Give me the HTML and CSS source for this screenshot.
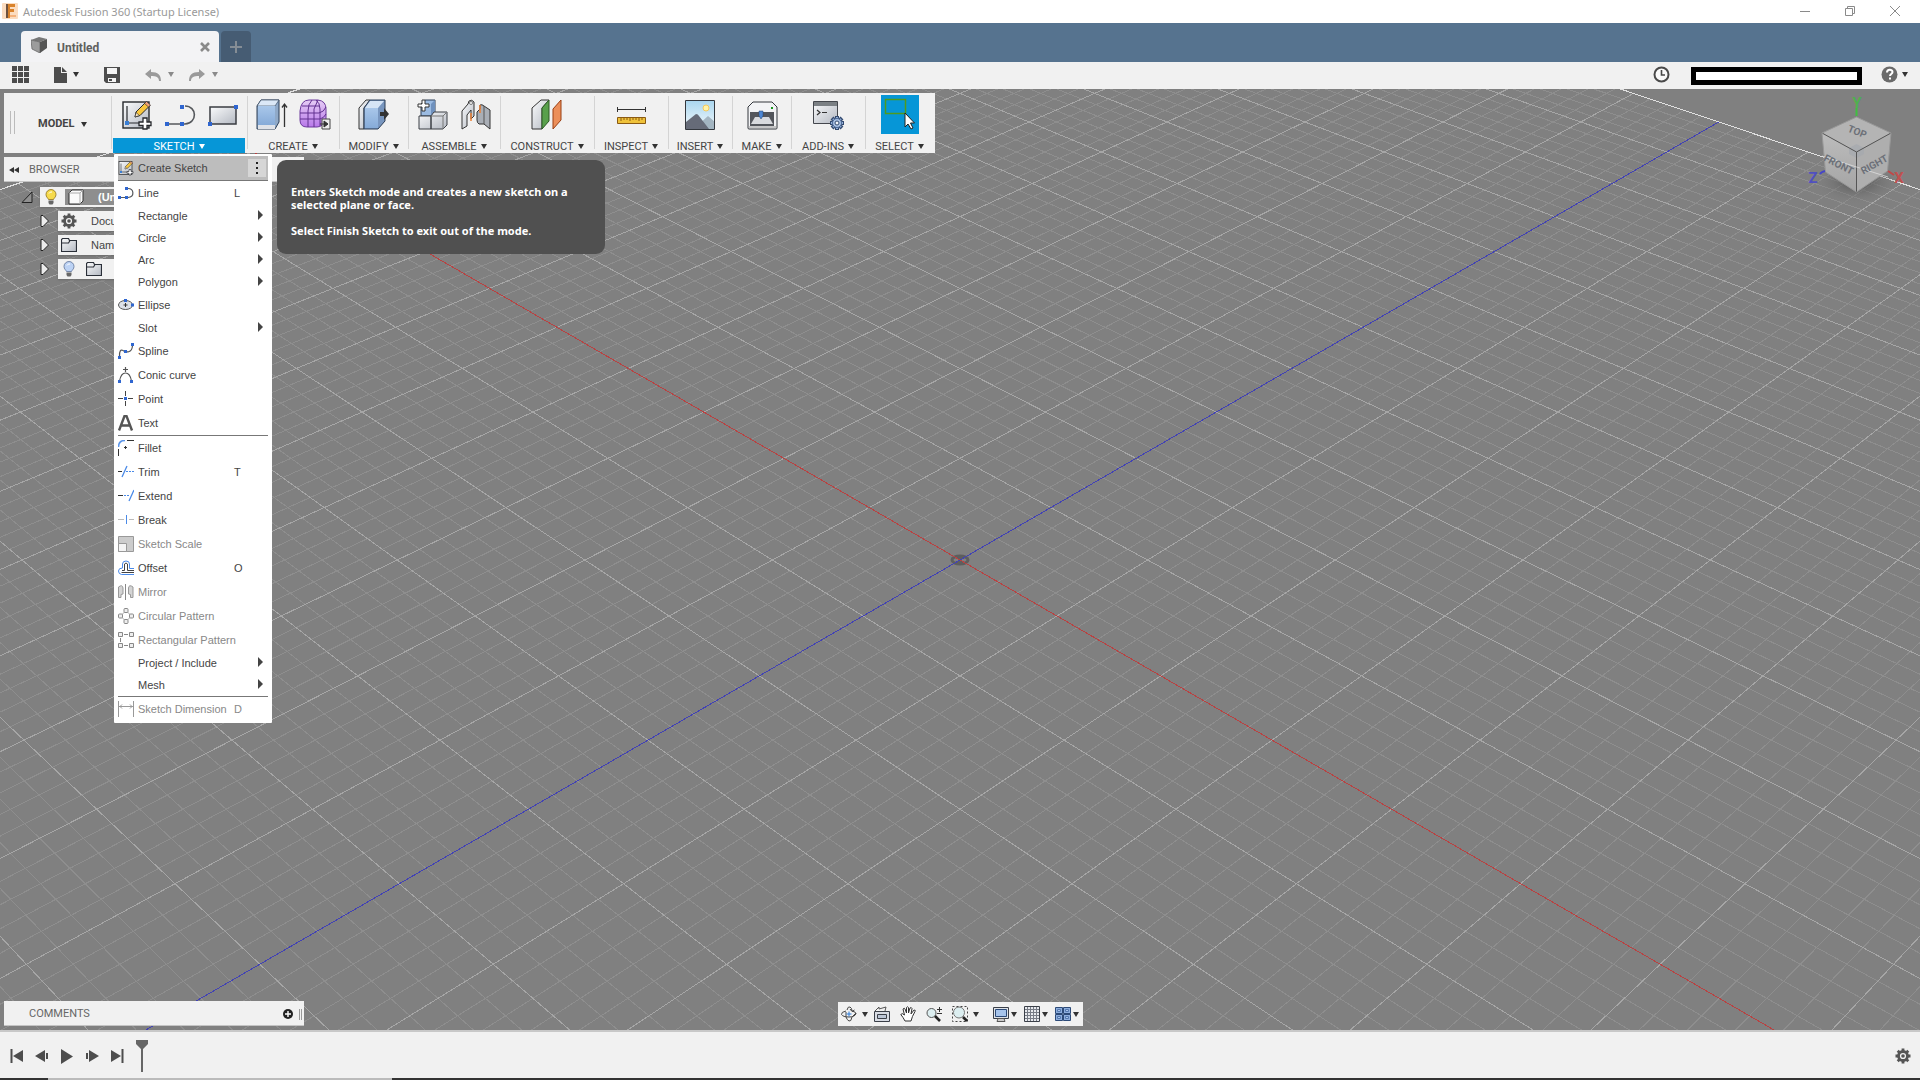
FILE: index.html
```html
<!DOCTYPE html>
<html lang="en">
<head>
<meta charset="utf-8">
<title>Autodesk Fusion 360 (Startup License)</title>
<link rel="stylesheet" href="styles.css">
</head>
<body>
<svg class="defs" aria-hidden="true">
  <defs>
    <linearGradient id="g-silver" x1="0" y1="0" x2="1" y2="1"><stop offset="0" stop-color="#fafbfc"/><stop offset="1" stop-color="#b4b9c2"/></linearGradient>
    <linearGradient id="g-blue" x1="0" y1="0" x2="0" y2="1"><stop offset="0" stop-color="#a9c7ea"/><stop offset="1" stop-color="#86abd8"/></linearGradient>
    <linearGradient id="g-sky" x1="0" y1="0" x2="0" y2="1"><stop offset="0" stop-color="#a9d6ef"/><stop offset="1" stop-color="#f4fafc"/></linearGradient>
    <linearGradient id="g-purple" x1="0" y1="0" x2="0" y2="1"><stop offset="0" stop-color="#e6cdf5"/><stop offset="1" stop-color="#b878ea"/></linearGradient>
    <linearGradient id="g-front" x1="0" y1="0" x2="0" y2="1"><stop offset="0" stop-color="#bcbcbc"/><stop offset="1" stop-color="#a4a4a4"/></linearGradient>
    <radialGradient id="g-shadow"><stop offset="0" stop-color="#444" stop-opacity=".8"/><stop offset="1" stop-color="#808080" stop-opacity="0"/></radialGradient>
    <symbol id="i-sketch" viewBox="0 0 32 32">
      <rect x="2" y="3" width="26" height="26" fill="url(#g-silver)" stroke="#26282c" stroke-width="1.4"/>
      <path d="M6 7v17h13" fill="none" stroke="#26282c" stroke-width="1.2"/>
      <rect x="4" y="22" width="4" height="4" fill="#3a7fd5"/>
      <path d="M14 18l1-5L25 3l4 3.500L19 16.500z" fill="#f8c63d" stroke="#26282c"/>
      <path d="M23.500 4.500L25.500 2.500l4 3.500-2 2z" fill="#f2a27a" stroke="#26282c" stroke-width=".6"/>
      <path d="M14 18l1-4.500 3.500 3z" fill="#fbe6c0" stroke="#26282c" stroke-width=".6"/>
      <path d="M22 19h4v4h4v3.500h-4V30h-4v-3.500h-4V23h4z" fill="#fff" stroke="#26282c" stroke-width="1.300"/>
    </symbol>
    <symbol id="i-line" viewBox="0 0 32 32">
      <path d="M3 25h18c13-1 12-18 0-18" fill="none" stroke="#55585c" stroke-width="1.600"/>
      <path d="M1 23h4v4H1zM16 23h4v4h-4zM16 6h4v4h-4z" fill="#2f66d0"/>
    </symbol>
    <symbol id="i-line-small" viewBox="0 0 16 16">
      <path d="M1 12.500h9c7-.5 6-9 0-9" fill="none" stroke="#55585c" stroke-width="1.200"/>
      <path d="M0 11h3v3H0zM7 11h3v3H7zM7 2h3v3H7z" fill="#2f66d0"/>
    </symbol>
    <symbol id="i-folder" viewBox="0 0 16 16"><path d="M.5 4V2.500l1-1h6l1 2h7v11H.5zM.5 6h7l1.500-2.500" fill="url(#g-silver)" stroke="#2a2f38" stroke-width="1.200"/></symbol>
    <symbol id="i-gear" viewBox="0 0 16 16">
      <path d="M8 .5v15M.5 8h15M2.700 2.700l10.600 10.600M13.300 2.700L2.700 13.300" stroke="#555" stroke-width="2.800"/>
      <circle cx="8" cy="8" r="4.500" fill="#f1f1f1" stroke="#555" stroke-width="2.800"/><circle cx="8" cy="8" r="1.800" fill="#555"/>
    </symbol>
    <symbol id="i-bulb" viewBox="0 0 16 16">
      <path d="M5.500 10.500C5 9 3 8 3 5.500a5 5 0 0 1 10 0C13 8 11 9 10.500 10.500z" stroke-width=".8"/>
      <path d="M5.500 11.500h5v2.500l-1 1.500h-3l-1-1.500z" fill="#666" stroke="none"/><path d="M6 4.500q1-2 3-1.500" stroke="#fff" fill="none"/>
    </symbol>
  </defs>
</svg>

<header class="titlebar">
  <svg class="logo" viewBox="0 0 16 16"><rect width="16" height="16" rx="1" fill="#fbdcc0"/><path d="M4 1h9v3H8v2h4v3H8v6H4z" fill="#d9822b"/><path d="M4 1h2v14H4z" fill="#6d5240"/><path d="M8 12h6v2H8z" fill="#f4b27c"/></svg>
  <span class="title">Autodesk Fusion 360 (Startup License)</span>
  <button class="win" aria-label="Minimize"><svg viewBox="0 0 10 10"><path d="M0 5.500h10"/></svg></button>
  <button class="win" aria-label="Restore"><svg viewBox="0 0 10 10"><path d="M.5 2.500h7v7h-7zM2.500 2.500v-2h7v7h-2"/></svg></button>
  <button class="win" aria-label="Close"><svg viewBox="0 0 10 10"><path d="M0 0l10 10M10 0L0 10"/></svg></button>
</header>

<nav class="tabs">
  <div class="tab">
    <svg class="tab-cube" viewBox="0 0 16 16"><path d="M0 3l8-3 8 2-7 3z" fill="#777"/><path d="M0 3l9 2v11L1 12z" fill="#9c9c9c" stroke="#666" stroke-width=".8"/><path d="M9 5l7-3v9l-7 5z" fill="#555"/></svg>
    <span>Untitled</span>
    <button class="tab-close" aria-label="Close tab"><svg viewBox="0 0 10 10"><path d="M1 1l8 8M9 1L1 9" stroke="#8a8a8a" stroke-width="2.600"/></svg></button>
  </div>
  <button class="tab-add" aria-label="New tab"><svg viewBox="0 0 12 12"><path d="M6 0v12M0 6h12" stroke="#858d95" stroke-width="2"/></svg></button>
</nav>

<div class="quickbar">
  <button class="q-grid" aria-label="Data panel"><svg viewBox="0 0 17 17"><path d="M0 0h5v5H0zM6 0h5v5H6zM12 0h5v5h-5zM0 6h5v5H0zM6 6h5v5H6zM12 6h5v5h-5zM0 12h5v5H0zM6 12h5v5H6zM12 12h5v5h-5z" fill="#4d4d4d"/></svg></button>
  <button class="q-file" aria-label="File"><svg viewBox="0 0 17 17"><path d="M0 1h7v6h6v10H0zM8 1l5 5H8z" fill="#4d4d4d"/></svg><i class="caret"></i></button>
  <button class="q-save" aria-label="Save"><svg viewBox="0 0 17 17"><path d="M0 1h16v16H2l-2-2z" fill="#4d4d4d"/><path d="M3 2h10v6H3zM4 12h8v4H4z" fill="#f4f4f4"/><path d="M5 13h3v2H5z" fill="#4d4d4d"/></svg></button>
  <button class="q-undo dim" aria-label="Undo"><svg viewBox="0 0 17 17"><path d="M0 8l6-5v3c7 0 10 3 10 9h-2c0-4-3-5-8-5v3z" fill="#9a9a9a"/></svg><i class="caret"></i></button>
  <button class="q-redo dim" aria-label="Redo"><svg viewBox="0 0 17 17"><path d="M16 8l-6-5v3C3 6 0 9 0 15h2c0-4 3-5 8-5v3z" fill="#9a9a9a"/></svg><i class="caret"></i></button>
  <button class="q-clock" aria-label="Job status"><svg viewBox="0 0 17 17"><circle cx="8.500" cy="8.500" r="7" fill="#fafafa" stroke="#4a4a4a" stroke-width="2"/><path d="M8.500 4v5H12" fill="none" stroke="#4a4a4a" stroke-width="1.600"/></svg></button>
  <div class="account"></div>
  <button class="q-help" aria-label="Help"><svg viewBox="0 0 17 17"><circle cx="8.500" cy="8.500" r="8" fill="#6a6a6a"/><path d="M6 6.500c0-3.500 5.500-3.500 5.500-.5 0 2-2.500 2-2.500 4M9 11.500v2" fill="none" stroke="#fff" stroke-width="2"/></svg><i class="caret"></i></button>
</div>

<main class="workspace">
  <svg class="canvas" viewBox="-960 -471 1920 941" preserveAspectRatio="xMidYMid slice" aria-hidden="true">
    <path id="minor" class="minor"/><path id="major" class="major"/>
    <path id="border" class="border"/>
    <ellipse cx="0" cy="0" rx="8" ry="4" fill="none" stroke="#5e5e5e" stroke-width="3"/>
    <path d="M-4-4h8l-3 4 3 4h-8l3-4z" fill="#5e5e5e"/>
    <path id="axis-x" class="axis-x"/><path id="axis-z" class="axis-z"/>
  </svg>

  <svg class="viewcube" viewBox="0 0 110 116" aria-label="View cube">
    <ellipse cx="57" cy="92" rx="44" ry="22" fill="url(#g-shadow)"/>
    <path d="M56.500 27L91 43 56.500 62 22 43z" fill="#b4b4b4"/>
    <path d="M22 43l34.500 19v40L25.500 82z" fill="url(#g-front)"/>
    <path d="M91 43L56.500 62v40l31-21z" fill="#aeaeae"/>
    <path d="M49 58l7.500-4 7.500 4v6l-7.500 4-7.500-4z" fill="#a2a7ae" opacity=".6"/>
    <path d="M22 43l34.500 19L91 43M56.500 62v40" fill="none" stroke="#555"/>
    <path d="M56.500 27L91 43l-3.500 38-31 21-31-20L22 43z" fill="none" stroke="#989898"/>
    <path d="M22 66l66 21" stroke="#e6e6e6" opacity=".7"/>
    <path d="M56.500 18v8" stroke="#3fc03f" stroke-width="2"/><path d="M20 84q1-2 5-3" stroke="#4545c8" stroke-width="2" fill="none"/><path d="M88 81l6 4" stroke="#c04848" stroke-width="2"/>
    <text x="57" y="45" class="face" transform="rotate(22 57 42)">TOP</text>
    <text x="39" y="78" class="face" transform="rotate(27 39 74)">FRONT</text>
    <text x="74" y="78" class="face" transform="rotate(-29 74 74)">RIGHT</text>
    <text x="57" y="18" class="axis" fill="#4fb04f">Y</text>
    <text x="13" y="93" class="axis" fill="#5050c0">Z</text>
    <text x="99" y="93" class="axis" fill="#c05050">X</text>
  </svg>

  <section class="ribbon">
    <span class="grip"></span>
    <button class="mode">MODEL <i class="caret"></i></button>

    <div class="group sketch active">
      <div class="icons">
        <svg><use href="#i-sketch"/></svg>
        <svg><use href="#i-line"/></svg>
        <svg viewBox="0 0 32 32"><rect x="3" y="8" width="26" height="17" fill="url(#g-silver)" stroke="#3a3d42" stroke-width="1.500"/><path d="M1 23h4v4H1zM27 6h4v4h-4z" fill="#2f66d0"/></svg>
      </div>
      <button class="label">SKETCH <i class="caret"></i></button>

      <div class="menu" role="menu">
        <button class="item current"><svg><use href="#i-sketch"/></svg><span>Create Sketch</span><i class="more"></i></button>
        <button class="item"><svg><use href="#i-line-small"/></svg><span>Line</span><kbd>L</kbd></button>
        <button class="item sub"><span>Rectangle</span></button>
        <button class="item sub"><span>Circle</span></button>
        <button class="item sub"><span>Arc</span></button>
        <button class="item sub"><span>Polygon</span></button>
        <button class="item"><svg viewBox="0 0 16 16"><ellipse cx="7.500" cy="8" rx="7" ry="4.500" fill="#dde1e8" stroke="#555"/><path d="M7.500 6v4M5.500 8h4" stroke="#333"/><path d="M6 2h3v3H6zM13 6.500h3v3h-3z" fill="#2f66d0"/></svg><span>Ellipse</span></button>
        <button class="item sub"><span>Slot</span></button>
        <button class="item"><svg viewBox="0 0 16 16"><path d="M1.500 14C1 8 3 6 5 7.500c3 2 9 3 9.500-5" fill="none" stroke="#555" stroke-width="1.200"/><path d="M0 13h3v3H0zM6 7h3v3H6zM13 0h3v3h-3z" fill="#2f66d0"/></svg><span>Spline</span></button>
        <button class="item"><svg viewBox="0 0 16 16"><path d="M1.500 14Q3 6 7.500 6t6 8M7.500 0v5M5 2.500h5" fill="none" stroke="#555" stroke-width="1.200"/><path d="M0 13h3v3H0zM12 13h3v3h-3z" fill="#2f66d0"/></svg><span>Conic curve</span></button>
        <button class="item"><svg viewBox="0 0 16 16"><path d="M0 7.500h5M10 7.500h5M7.500 0v5M7.500 10v5" stroke="#444"/><path d="M6 6h3v3H6z" fill="#2f66d0"/></svg><span>Point</span></button>
        <button class="item"><svg viewBox="0 0 16 16"><path d="M1 15.500L6.500 1h2L14 15.500M3.500 10.500h8" fill="none" stroke="#555" stroke-width="2.400"/></svg><span>Text</span></button>
        <hr>
        <button class="item"><svg viewBox="0 0 16 16"><path d="M.5 7Q.5.500 7 .5" fill="none" stroke="#5a95ea" stroke-width="1.600"/><path d="M.5 9v7M9 .5h7M6 7.500h3M7.500 6v3" stroke="#333"/></svg><span>Fillet</span></button>
        <button class="item"><svg viewBox="0 0 16 16"><path d="M0 7.500h4" stroke="#333"/><path d="M4 13L9 2" stroke="#4a8ae8" stroke-width="1.300"/><path d="M8 7.500h8" stroke="#4a8ae8" stroke-dasharray="2 1"/></svg><span>Trim</span><kbd>T</kbd></button>
        <button class="item"><svg viewBox="0 0 16 16"><path d="M0 7.500h5" stroke="#333"/><path d="M6 7.500h6" stroke="#4a8ae8" stroke-dasharray="2 1"/><path d="M11 13l5-11" stroke="#4a8ae8" stroke-width="1.300"/></svg><span>Extend</span></button>
        <button class="item"><svg viewBox="0 0 16 16"><path d="M0 7.500h6M11 7.500h5" stroke="#bbb"/><path d="M8.500 3v9" stroke="#4a8ae8"/></svg><span>Break</span></button>
        <button class="item" disabled><svg viewBox="0 0 16 16"><path d="M.5.500h15v15H.5z" fill="#ccc" stroke="#999"/><path d="M.5 7.500h8v8h-8z" fill="#f4f4f4" stroke="#999"/></svg><span>Sketch Scale</span></button>
        <button class="item"><svg viewBox="0 0 16 16"><path d="M16 8.500h-4.500V4q0-3-3.500-3T4.500 4v4Q.5 8 .5 11t3 3.500H16" fill="none" stroke="#4a8ae8"/><path d="M16 10.500H9.500V4q-1.500-2-3 0v6.500H4M3.500 12.500H16" fill="none" stroke="#444"/></svg><span>Offset</span><kbd>O</kbd></button>
        <button class="item" disabled><svg viewBox="0 0 16 16"><path d="M.5 13.500V3q4-3 4.500 1v6l-2 .5v3zM15 13.500V3q-4-3-4.500 1v6l2 .5v3z" fill="#d4d4d4" stroke="#999"/><path d="M7.500 0v16" stroke="#888"/></svg><span>Mirror</span></button>
        <button class="item" disabled><svg viewBox="0 0 16 16"><path d="M8 2.500L13.500 8 8 13.500 2.500 8z" fill="none" stroke="#aaa"/><g fill="#eee" stroke="#888"><rect x="6" y=".5" width="4" height="4" rx="1"/><rect x="6" y="11.500" width="4" height="4" rx="1"/><rect x=".5" y="6" width="4" height="4" rx="1"/><rect x="11.500" y="6" width="4" height="4" rx="1"/></g></svg><span>Circular Pattern</span></button>
        <button class="item" disabled><svg viewBox="0 0 16 16"><path d="M6 2.500h4M6 13.500h4M2.500 6v4" stroke="#888"/><g fill="#eee" stroke="#888"><path d="M.5.500h4v4h-4zM11.500.500h4v4h-4zM.5 11.500h4v4h-4zM11.500 11.500h4v4h-4z"/></g></svg><span>Rectangular Pattern</span></button>
        <button class="item sub"><span>Project / Include</span></button>
        <button class="item sub"><span>Mesh</span></button>
        <hr>
        <button class="item" disabled><svg viewBox="0 0 16 16"><path d="M.5 0v16M15.500 0v16M1 5.500h14M4 3.500l-2 2 2 2M12 3.500l2 2-2 2" fill="none" stroke="#999"/></svg><span>Sketch Dimension</span><kbd>D</kbd></button>
      </div>
      <div class="tooltip" role="tooltip">
        <p>Enters Sketch mode and creates a new sketch on a selected plane or face.</p>
        <p>Select Finish Sketch to exit out of the mode.</p>
      </div>
    </div>

    <div class="group create">
      <div class="icons">
        <svg viewBox="0 0 32 32"><path d="M1 7l4-6h18v22l-4 7H1z" fill="#8fa9c8" stroke="#2c3e56"/><path d="M1 7l4-6h18l-4 6z" fill="#dbe8f7" stroke="#2c3e56" stroke-width=".6"/><path d="M2 7h17v19H2z" fill="url(#g-blue)"/><path d="M2 26h17v4H2z" fill="#dfe2e8"/><path d="M28.500 28V6M26 8.500L28.500 5 31 8.500" fill="none" stroke="#333" stroke-width="1.300"/></svg>
        <svg viewBox="0 0 32 32"><path d="M1 12Q2 1 10 1h9q8 1 8 9v10q-3 8-9 8H8q-7 0-7-7z" fill="url(#g-purple)" stroke="#6c3a9c"/><path d="M1 14h19q5-1 7-6M1 20h20q4-1 6-5M3 7h17M9 28V12q0-7 4-11M15 28V10l4-9M21 27V10q0-6-4-9" fill="none" stroke="#60308f"/><path d="M23 20h8v10h-8z" fill="#eee" stroke="#444"/><path d="M21 25h4v-3l4 3-4 3v-3" fill="#333" stroke="#333"/></svg>
      </div>
      <button class="label">CREATE <i class="caret"></i></button>
    </div>
    <div class="group modify">
      <div class="icons"><svg viewBox="0 0 32 32"><path d="M1 9l7-8h4L6 9v21H1z" fill="url(#g-silver)" stroke="#333"/><path d="M6 9l6-8h15v21l-7 8H6z" fill="#7896bf" stroke="#2c3e56"/><path d="M7 9h13v20H7z" fill="url(#g-blue)"/><path d="M7 9l5-7h14l-6 7z" fill="#d6e5f6"/><path d="M22 13h4V9l5 6-5 6v-4h-4z" fill="#333"/></svg></div>
      <button class="label">MODIFY <i class="caret"></i></button>
    </div>
    <div class="group assemble">
      <div class="icons">
        <svg viewBox="0 0 32 32"><path d="M4 5l4-4h10v16H4z" fill="#9bbbe2" stroke="#2c3e56"/><path d="M14 5l4-4v13l-4 3z" fill="#6f91be"/><path d="M2 17h12v13H2zM14 17l3-4h13v13l-4 4H14z" fill="url(#g-silver)" stroke="#3b3e44"/><path d="M14 17h12v13M26 17l4-4" fill="none" stroke="#777"/><path d="M5 1h3v4h4v3H8v4H5V8H1V5h4z" fill="#fff" stroke="#333"/></svg>
        <svg viewBox="0 0 32 32"><path d="M2 12l6-7 1-3q3-2 5 1v14l-3 3V11l-4 5v11l-5 3z" fill="url(#g-silver)" stroke="#333"/><path d="M17 13l3-3V6q2-1 4 1l6 4v19l-6-5h-5q-2-1-2-4z" fill="#a9aeb6" stroke="#333"/><path d="M24 7v18" stroke="#555"/><circle cx="11" cy="4" r="1.500" fill="#fff" stroke="#333" stroke-width=".6"/><path d="M11 14v8M20 6v8" stroke="#ec8035" stroke-width="1.500"/></svg>
      </div>
      <button class="label">ASSEMBLE <i class="caret"></i></button>
    </div>
    <div class="group construct">
      <div class="icons"><svg viewBox="0 0 32 32"><path d="M1 9l9-8h8l-7 8v21H1z" fill="url(#g-silver)" stroke="#333"/><path d="M11 9l7-8v21l-7 8z" fill="#58a04c" stroke="#2c5a24"/><path d="M22 10l8-9v20l-8 9z" fill="#ec8f5a" stroke="#9a3f13"/></svg></div>
      <button class="label">CONSTRUCT <i class="caret"></i></button>
    </div>
    <div class="group inspect">
      <div class="icons"><svg viewBox="0 0 32 32"><path d="M2.500 8v5M30.500 8v5M3 10.500h27" stroke="#333"/><path d="M2.500 18.500h28v6h-28z" fill="#efc23a" stroke="#8a5a12"/><path d="M6 19v3M9 19v2M12 19v2M15 19v3M18 19v2M21 19v2M24 19v3M27 19v2" stroke="#8a5a12"/></svg></div>
      <button class="label">INSPECT <i class="caret"></i></button>
    </div>
    <div class="group insert">
      <div class="icons"><svg viewBox="0 0 32 32"><path d="M1.500 1.500h29v29h-29z" fill="url(#g-sky)"/><circle cx="22" cy="9" r="3" fill="#fff3a8" stroke="#f4c95c"/><path d="M14 26l10-9 7 6v7H14z" fill="#a3b5c1"/><path d="M2 23l10-8q2 0 3 2l10 13H2z" fill="#666b78"/><path d="M1.500 1.500h29v29h-29z" fill="none" stroke="#33373d"/></svg></div>
      <button class="label">INSERT <i class="caret"></i></button>
    </div>
    <div class="group make">
      <div class="icons"><svg viewBox="0 0 32 32"><path d="M2 8l5-5h19l5 5v21q0 1-1 1H3q-1 0-1-1z" fill="#f2f3f5" stroke="#33373d"/><path d="M4 13h24v14H4z" fill="#53565c"/><path d="M9 18h14l4 7H5z" fill="#d8dade"/><path d="M13 12h4v5l-2 3-2-3z" fill="#4c86d4" stroke="#24406c" stroke-width=".5"/><path d="M25 8h2v2h-2z" fill="#17951b"/><path d="M2 28h29" stroke="#999"/></svg></div>
      <button class="label">MAKE <i class="caret"></i></button>
    </div>
    <div class="group addins">
      <div class="icons"><svg viewBox="0 0 32 32"><path d="M1.500 2.500h24v22h-24z" fill="url(#g-silver)" stroke="#44474d"/><path d="M2 3h23v4H2z" fill="#7b8084"/><path d="M5 11l3 2.500L5 16M10 13.500h5" fill="none" stroke="#333" stroke-width="1.200"/><path d="M25 17v14M18 24h14M20 19l10 10M30 19L20 29" stroke="#334a70" stroke-width="4"/><path d="M25 18v12M19 24h12M21 20l8 8M29 20l-8 8" stroke="#93afd8" stroke-width="2"/><circle cx="25" cy="24" r="4.500" fill="#a9c1e4" stroke="#4a6794"/><circle cx="25" cy="24" r="2" fill="#f3f6fa" stroke="#334a70"/></svg></div>
      <button class="label">ADD-INS <i class="caret"></i></button>
    </div>
    <div class="group select">
      <div class="icons"><svg class="pick" viewBox="0 0 38 39"><path d="M4.500 4.500h20v14h-20z" fill="none" stroke="#4f9a1e" stroke-width="1.500"/><path d="M24 18v14l3-3 3 5 2-1-2.500-5h4z" fill="#fff" stroke="#222"/></svg></div>
      <button class="label">SELECT <i class="caret"></i></button>
    </div>
  </section>

  <aside class="browser">
    <h2><svg viewBox="0 0 10 6"><path d="M5 0v6L0 3zM10 0v6L5 3z" fill="#333"/></svg>BROWSER</h2>
    <ul>
      <li class="root"><svg class="twist" viewBox="0 0 12 12"><path d="M11 1v10.500H1z" fill="#909090" stroke="#222"/></svg>
        <div class="node"><svg viewBox="0 0 16 16" class="on"><use href="#i-bulb"/></svg><span class="doc"><svg viewBox="0 0 16 16"><path d="M1 4l3-3h11v11l-3 3H1z" fill="#fafafa" stroke="#333"/><path d="M1 4h11v11M12 4l3-3" fill="none" stroke="#aaa"/></svg>(Un</span></div></li>
      <li><svg class="twist" viewBox="0 0 12 12"><path d="M2 .5h2l5.500 5.500L4 11.500H2z" fill="#ececec" stroke="#222"/></svg><div class="node"><svg><use href="#i-gear"/></svg><span>Docu</span></div></li>
      <li><svg class="twist" viewBox="0 0 12 12"><path d="M2 .5h2l5.500 5.500L4 11.500H2z" fill="#ececec" stroke="#222"/></svg><div class="node"><svg><use href="#i-folder"/></svg><span>Nam</span></div></li>
      <li><svg class="twist" viewBox="0 0 12 12"><path d="M2 .5h2l5.500 5.500L4 11.500H2z" fill="#ececec" stroke="#222"/></svg><div class="node"><svg class="off"><use href="#i-bulb"/></svg><svg class="second"><use href="#i-folder"/></svg></div></li>
    </ul>
  </aside>

  <footer class="dock">
    <section class="comments"><span>COMMENTS</span><button aria-label="Add comment"><svg viewBox="0 0 10 10"><circle cx="5" cy="5" r="5" fill="#222"/><path d="M5 2v6M2 5h6" stroke="#fff" stroke-width="1.400"/></svg></button><i class="handle"></i></section>
    <div class="navbar">
      <button class="drop" aria-label="Orbit"><svg viewBox="0 0 16 16"><path d="M6 4Q7 0 9 1t2 4M11 11q-1 5-3 4t-3-4V6M5 5Q0 6 .5 8.500 2 11 8 11t7-3.500Q15 6 11 5M9 3l2 2.500L13.500 4M12 10l3-3" fill="none" stroke="#444"/><path d="M5.500 8h5M8 5.500v5" stroke="#2a7ad8"/></svg><i class="caret"></i></button>
      <button aria-label="Look at"><svg viewBox="0 0 16 16"><path d="M.5 5.500h15v10H.5z" fill="#d8dce4" stroke="#3a3f48"/><path d="M3.500 8.500h9v4h-9z" fill="#bcc6d6" stroke="#3a3f48"/><path d="M1 5l4-4v2l7-2-1 4" fill="none" stroke="#555"/></svg></button>
      <button aria-label="Pan"><svg viewBox="0 0 16 16"><path d="M5 15Q3 11 .8 8.500 2 6.500 4.500 9L3 3q1.500-1.500 2 0l1.500 4V1.500q1-1.500 2 0V7l1.500-5q1.500-1 2 .5L11 8l3-4q2 0 1 1.500-3 5-4 9.500z" fill="#fff" stroke="#333"/></svg></button>
      <button aria-label="Zoom"><svg viewBox="0 0 16 16"><circle cx="5.500" cy="7" r="4.500" fill="#dceef0" stroke="#555"/><path d="M9 10l5 5" stroke="#222" stroke-width="2.600"/><path d="M13.500 1v5M11 3.500h5M11 7.500h5" stroke="#333"/></svg></button>
      <button class="drop" aria-label="Fit"><svg viewBox="0 0 16 16"><path d="M.5.500h15v15H.5z" fill="none" stroke="#444" stroke-dasharray="2 2"/><circle cx="7" cy="6.500" r="5.500" fill="#dceef0" stroke="#777"/><path d="M11 11l4 4" stroke="#222" stroke-width="2.600"/></svg><i class="caret"></i></button>
      <button class="drop tight first" aria-label="Display settings"><svg viewBox="0 0 16 16"><path d="M.5 1.500h15v11H.5z" fill="#dfe3e8" stroke="#3a3f48"/><path d="M2.500 3.500h11v7h-11z" fill="#a6c4ec" stroke="#2c4a78"/><path d="M5 12.500h6l1 3H4z" fill="#ccc" stroke="#555"/></svg><i class="caret"></i></button>
      <button class="drop tight" aria-label="Grid and snaps"><svg viewBox="0 0 16 16"><path d="M.5.500h15v15H.5z" fill="#e8eaee" stroke="#3a3f48"/><path d="M3.500 1v14M6.500 1v14M9.500 1v14M12.500 1v14M1 3.500h14M1 6.500h14M1 9.500h14M1 12.500h14" stroke="#777c86"/></svg><i class="caret"></i></button>
      <button class="drop tight" aria-label="Viewports"><svg viewBox="0 0 16 16"><path d="M.5 1.500h7v6h-7zM8.500 1.500h7v6h-7zM.5 8.500h7v6h-7zM8.500 8.500h7v6h-7z" fill="#8daede" stroke="#2c4a78"/><path d="M2.500 3.500h3v2h-3zM10.500 3.500h3v2h-3zM2.500 10.500h3v2h-3zM10.500 10.500h3v2h-3z" fill="#a9c4ea" stroke="#5478ae"/></svg><i class="caret"></i></button>
    </div>
  </footer>
</main>

<footer class="timeline">
  <button aria-label="Go to start"><svg viewBox="0 0 14 16"><path d="M1.500 1v14" stroke="#4d4d4d" stroke-width="2"/><path d="M13 2v12L3 8z" fill="#4d4d4d"/></svg></button>
  <button aria-label="Step back"><svg viewBox="0 0 14 16"><path d="M10 2v12L0 8zM11 5h2v6h-2z" fill="#4d4d4d"/></svg></button>
  <button aria-label="Play"><svg viewBox="0 0 14 16"><path d="M1 1v15l12-7.500z" fill="#4d4d4d"/></svg></button>
  <button aria-label="Step forward"><svg viewBox="0 0 14 16"><path d="M4 2v12l10-6zM1 5h2v6H1z" fill="#4d4d4d"/></svg></button>
  <button aria-label="Go to end"><svg viewBox="0 0 14 16"><path d="M12.500 1v14" stroke="#4d4d4d" stroke-width="2"/><path d="M1 2v12l10-6z" fill="#4d4d4d"/></svg></button>
  <svg class="marker" viewBox="0 0 12 32"><path d="M0 0h12v4L7 9v23H5V9L0 4z" fill="#666"/></svg>
  <button class="settings" aria-label="Timeline settings"><svg><use href="#i-gear"/></svg></button>
</footer>
<div class="taskbar"><i></i></div>
<script src="grid.js"></script>
</body>
</html>
```
FILE: styles.css
```css
* { box-sizing: border-box; }

body {
  margin: 0;
  height: 100vh;
  display: flex;
  flex-direction: column;
  overflow: hidden;
  background: #f1f1f1;
  color: #444;
  font: 11px/16px "Liberation Sans", Arial, sans-serif;
}

button {
  display: flex;
  align-items: center;
  margin: 0;
  padding: 0;
  border: 0;
  background: none;
  color: inherit;
  font: inherit;
}

svg { display: block; flex: none; }
.defs { position: absolute; width: 0; height: 0; }

.caret {
  flex: none;
  border: 3px solid transparent;
  border-top: 5px solid #333;
  border-bottom: 0;
}
.dim .caret { border-top-color: #8a8a8a; }

/* Title bar */
.titlebar {
  flex: none;
  display: flex;
  align-items: center;
  height: 23px;
  padding: 0 20px 2px 2px;
  background: #fff;
}
.logo { width: 16px; height: 16px; }
.title {
  margin: 2px auto 0 5px;
  color: #999;
  font: 11px/16px "Noto Sans", "Open Sans", sans-serif;
}
.win { margin-left: 35px; }
.win svg { width: 10px; height: 10px; overflow: visible; fill: none; stroke: #8a8a8a; }

/* Document tabs */
.tabs {
  flex: none;
  display: flex;
  align-items: flex-end;
  gap: 2px;
  height: 39px;
  padding-left: 21px;
  background: #56738f;
}
.tab {
  display: flex;
  align-items: center;
  width: 198px;
  height: 31px;
  padding: 0 9px 0 10px;
  border-radius: 4px 4px 0 0;
  background: #f3f3f5;
  color: #606060;
  font: bold 12px/16px Roboto, sans-serif;
}
.tab span { margin-top: 2px; }
.tab-cube { width: 16px; height: 16px; margin: 0 10px 4px 0; }
.tab-close { margin-left: auto; }
.tab-close svg { width: 10px; height: 10px; }
.tab-add {
  justify-content: center;
  width: 30px;
  height: 31px;
  border-radius: 4px 4px 0 0;
  background: #465c73;
}
.tab-add svg { width: 12px; height: 12px; }

/* Quick access bar */
.quickbar {
  flex: none;
  display: flex;
  align-items: center;
  height: 27px;
  padding: 0 12px 2px;
  background: #f1f1f1;
}
.quickbar svg { width: 17px; height: 17px; }
.quickbar .caret { margin-left: 2px; }
.q-file { margin-left: 25px; }
.q-save { margin-left: 25px; }
.q-undo { margin-left: 24px; }
.q-redo { margin-left: 15px; }
.q-undo .caret, .q-redo .caret { margin-left: 6px; }
.q-clock { margin-left: auto; }
.account {
  width: 171px;
  height: 18px;
  margin: 3px 19px 0 21px;
  border: 5px solid #000;
  background: #fff;
}
.q-help .caret { margin-left: 4px; }

/* Workspace */
.workspace {
  position: relative;
  flex: 1;
  min-height: 0;
  display: flex;
  flex-direction: column;
  align-items: flex-start;
  padding: 4px;
  background: #808080;
}
.canvas { position: absolute; inset: 0; width: 100%; height: 100%; }
.canvas path { shape-rendering: crispEdges; }
.minor, .major, .border, .axis-x, .axis-z { fill: none; stroke-width: 1; }
.minor { stroke: #8e8e8e; }
.major { stroke: #a6a6a6; }
.border { stroke: #e0e0e0; }
.axis-x { stroke: #b84242; }
.axis-z { stroke: #4242b4; }
.viewcube { position: absolute; top: 1px; right: 10px; width: 110px; height: 116px; }
.face { fill: #6c7078; font: bold 10px Roboto, sans-serif; text-anchor: middle; }
.axis { font: bold 15px Roboto, sans-serif; text-anchor: middle; }

/* Ribbon */
.ribbon {
  position: relative;
  z-index: 2;
  display: flex;
  height: 60px;
  padding-right: 1px;
  background: #f1f1f1;
  font: 11px/14px Roboto, sans-serif;
}
.grip {
  width: 5px;
  height: 23px;
  margin: 18px 0 0 6px;
  border: 1px solid #bbb;
  border-width: 0 1px;
}
.mode {
  gap: 6px;
  width: 96px;
  padding-left: 23px;
  padding-top: 2px;
  font-weight: bold;
}
.group {
  position: relative;
  display: flex;
  flex-direction: column;
}
.group::before {
  content: "";
  position: absolute;
  left: 0;
  top: 3px;
  bottom: 4px;
  border-left: 1px solid #d4d4d4;
}
.icons { display: flex; align-items: center; justify-content: center; gap: 11px; height: 43px; }
.icons svg { width: 32px; height: 32px; }
.icons .pick { width: 38px; height: 39px; background: #0696d7; }
.label {
  justify-content: center;
  gap: 4px;
  height: 15px;
  margin-top: 2px;
  padding-top: 2px;
  white-space: nowrap;
}
.sketch { width: 136px; padding-left: 2px; padding-right: 2px; }
.sketch .icons { padding-left: 2px; }
.active > .label { background: #0696d7; color: #fff; }
.active > .label .caret { border-top-color: #fff; }
.create, .assemble { width: 92px; }
.modify, .select { width: 69px; }
.construct { width: 94px; }
.inspect, .addins { width: 74px; }
.insert { width: 64px; }
.make { width: 59px; }

/* Sketch menu */
.menu {
  position: absolute;
  top: 61px;
  left: 3px;
  width: 158px;
  padding: 2px 4px;
  border-radius: 1px;
  background: #fff;
  color: #444;
  font: 11px/16px "Liberation Sans", Arial, sans-serif;
}
.item { width: 100%; height: 24px; text-align: left; }
.item svg { width: 16px; height: 16px; margin-right: 4px; }
.item kbd { width: 34px; margin-left: auto; font: inherit; }
.item:disabled { color: #888; }
.item.current {
  height: 25px;
  border-bottom: 1px solid #777;
  background: #bdbdbd;
}
.more {
  display: grid;
  place-items: center;
  width: 18px;
  height: 18px;
  margin: 0 2px 0 auto;
  background: #d6d6d6;
}
.more::before {
  content: "";
  width: 2px;
  height: 2px;
  background: #222;
  box-shadow: 0 -5px #222, 0 5px #222;
}
.item.sub { height: 22px; padding-left: 20px; }
.sub::after {
  content: "";
  margin: 0 5px 2px auto;
  border: 5px solid transparent;
  border-left-color: #444;
  border-right: 0;
}
.menu hr { height: 1px; margin: 0; border: 0; background: #777; }

.tooltip {
  position: absolute;
  top: 67px;
  left: 166px;
  width: 328px;
  padding: 25px 14px 17px;
  border-radius: 9px;
  background: #505050;
  color: #fff;
  font: bold 11px/13px "Noto Sans", sans-serif;
}
.tooltip p { margin: 0; }
.tooltip p + p { margin-top: 13px; }

/* Browser */
.browser { position: relative; width: 300px; margin-top: 4px; }
.browser h2 {
  display: flex;
  align-items: center;
  gap: 10px;
  height: 25px;
  margin: 0;
  padding: 2px 0 0 5px;
  border-bottom: 1px solid #c4c4c4;
  background: #f1f1f1;
  color: #666;
  font: 11px/16px Roboto, sans-serif;
}
.browser h2 svg { width: 10px; height: 6px; }
.browser ul { display: grid; gap: 4px; width: 112px; margin: 5px 0 0; padding: 0; list-style: none; }
.browser li { display: flex; align-items: center; gap: 7px; padding-left: 35px; }
.browser .root { padding-left: 17px; }
.twist { flex: none; width: 12px; height: 12px; }
.node {
  display: flex;
  align-items: center;
  flex: 1;
  height: 20px;
  padding-left: 3px;
  background: #f1f1f1;
  box-shadow: 0 1px 2px #6a6a6a;
}
.node svg { width: 16px; height: 16px; }
.node > span { margin-left: 14px; }
.on { fill: #f6da4c; stroke: #8a6d1c; }
.off { fill: #bcd2f4; stroke: #5d7196; }
.node .second { margin-left: 9px; }
.node > .doc {
  display: flex;
  align-items: center;
  gap: 14px;
  flex: 1;
  height: 16px;
  margin-left: 6px;
  padding-left: 3px;
  background: #8e8e8e;
  color: #fff;
  font-weight: bold;
}

/* Comments and navigation */
.dock {
  position: relative;
  display: grid;
  grid-template-columns: 1fr auto 1fr;
  width: 100%;
  margin-top: auto;
}
.comments {
  display: flex;
  align-items: center;
  width: 300px;
  height: 25px;
  padding: 2px 2px 0 25px;
  border-bottom: 1px solid #c4c4c4;
  background: #f1f1f1;
  color: #666;
  font: 11px/16px Roboto, sans-serif;
}
.comments button { margin: 0 6px 0 auto; }
.comments svg { width: 10px; height: 10px; }
.handle { width: 3px; height: 11px; border: 1px solid #999; border-width: 0 1px; }
.navbar {
  display: flex;
  align-items: center;
  gap: 10px;
  height: 24px;
  margin-top: 1px;
  padding: 0 7px 0 3px;
  background: #f1f1f1;
}
.navbar button { gap: 5px; }
.navbar svg { width: 16px; height: 16px; }
.navbar .drop { margin-right: -4px; }
.navbar .tight { gap: 2px; margin-right: -3px; }
.navbar .first { margin-left: 8px; }

/* Timeline */
.timeline {
  flex: none;
  display: flex;
  align-items: center;
  gap: 11px;
  height: 48px;
  padding: 2px 9px 0 10px;
  border-top: 2px solid #c8c8c8;
  background: #f1f1f1;
}
.timeline svg { width: 14px; height: 16px; }
.timeline .marker { width: 12px; height: 32px; margin-left: 1px; }
.timeline .settings { margin-left: auto; }
.timeline .settings svg { width: 16px; }
.taskbar { flex: none; display: flex; height: 2px; padding-left: 48px; background: #333; }
.taskbar i { width: 344px; background: #bbb; }
```
FILE: grid.js
```js
// Ground plane seen in perspective: u runs up to the right (Z axis), v down to the right (X axis).
const SCALE_X = 18.759;
const SCALE_Y = 10.83;
const DEPTH = 0.006543;
const EXTENT = 55;

function project(u, v) {
  const w = 1 + DEPTH * (u - v);
  return (SCALE_X * (u + v) / w).toFixed(2) + " " + (-SCALE_Y * (u - v) / w).toFixed(2);
}

function segment(u1, v1, u2, v2) {
  return "M" + project(u1, v1) + "L" + project(u2, v2);
}

let minor = "";
let major = "";
for (let i = -EXTENT + 1; i < EXTENT; i++) {
  if (i === 0) continue;
  const lines = segment(i, -EXTENT, i, EXTENT) + segment(-EXTENT, i, EXTENT, i);
  if (i % 5 === 0) major += lines;
  else minor += lines;
}

const border = segment(EXTENT, -EXTENT, EXTENT, EXTENT) + segment(-EXTENT, -EXTENT, EXTENT, -EXTENT);

document.getElementById("minor").setAttribute("d", minor);
document.getElementById("major").setAttribute("d", major);
document.getElementById("border").setAttribute("d", border);
document.getElementById("axis-x").setAttribute("d", segment(0, -EXTENT, 0, EXTENT));
document.getElementById("axis-z").setAttribute("d", segment(-EXTENT, 0, EXTENT, 0));
```
